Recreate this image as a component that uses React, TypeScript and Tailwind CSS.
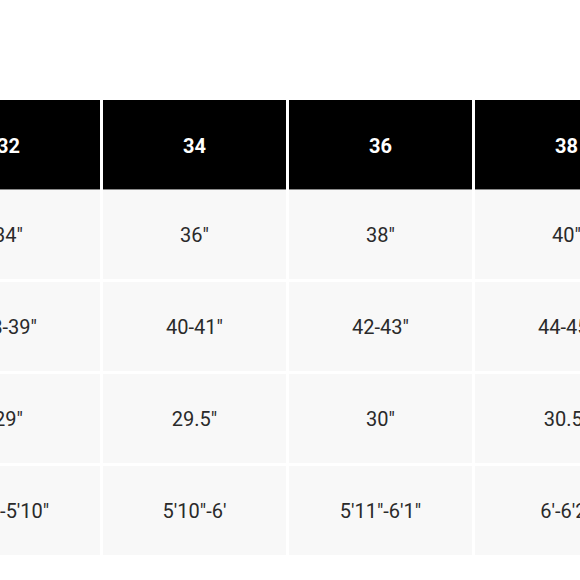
import React from 'react';

const sizes = ['32', '34', '36', '38'];

const rows: string[][] = [
  ['34"', '36"', '38"', '40"'],
  ['38-39"', '40-41"', '42-43"', '44-45"'],
  ['29"', '29.5"', '30"', '30.5"'],
  ['5\'8"-5\'10"', '5\'10"-6\'', '5\'11"-6\'1"', '6\'-6\'2"'],
];

export default function App() {
  return (
    <div
      className="w-[580px] h-[580px] bg-white overflow-hidden"
      style={{ fontFamily: 'Roboto, "Liberation Sans", sans-serif' }}
    >
      {/* table is scrolled sideways, first columns are off screen */}
      <div className="ml-[-83px] pt-[100px] flex flex-col gap-[3px]">
        <div className="flex gap-[3px]">
          {sizes.map((s) => (
            <div
              key={s}
              className="w-[183px] h-[90px] shrink-0 bg-black border-b border-[#8a8a8a] flex items-center justify-center pt-[2px] text-white font-bold text-[20px]"
            >
              {s}
            </div>
          ))}
        </div>
        {rows.map((r, i) => (
          <div key={i} className={`flex gap-[3px] ${i === 0 ? '-mt-[3px]' : ''}`}>
            {r.map((c, j) => (
              <div
                key={j}
                className="w-[183px] h-[89px] shrink-0 bg-[#f8f8f8] flex items-center justify-center text-[#2a2a2a] text-[20px]"
              >
                {c}
              </div>
            ))}
          </div>
        ))}
      </div>
    </div>
  );
}
